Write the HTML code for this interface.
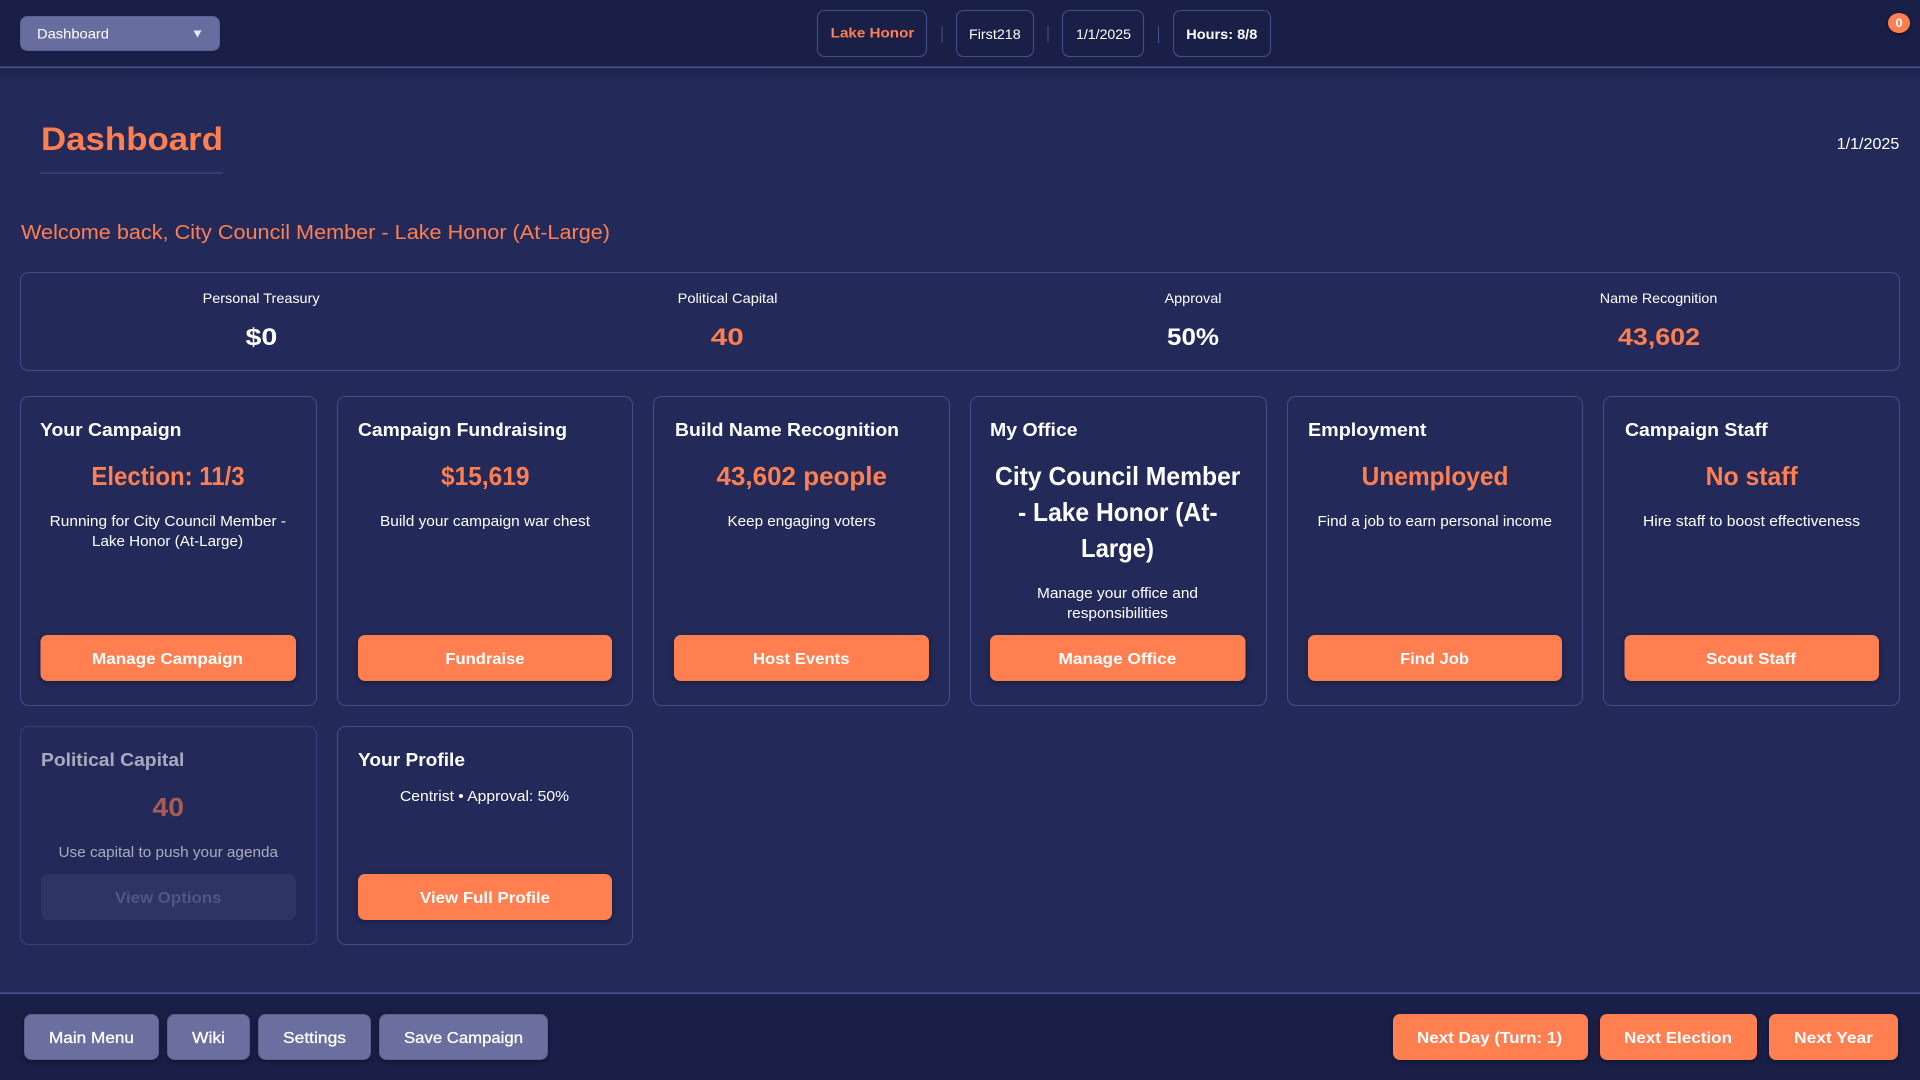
<!DOCTYPE html>
<html lang="en"><head><meta charset="utf-8"><title>Dashboard</title>
<style>
html,body{margin:0;padding:0;width:1920px;height:1080px;overflow:hidden;background:#232a5a}
svg{display:block}
text{font-family:"Liberation Sans",sans-serif;fill:#fff}
.b{font-weight:700}
.o{fill:#ff7f50}
.card{fill:#232a5a;stroke:#454c8a;stroke-width:1}
.pill{fill:#1a1f48;stroke:#464d8b;stroke-width:1.1}
.btn{fill:#ff7f50;filter:drop-shadow(0 2px 3px rgba(0,0,0,.35))}
.gbtn{fill:#6b6f9f;stroke:#5b6090;stroke-width:1;filter:drop-shadow(0 2px 3px rgba(0,0,0,.35))}
.t18{font-size:18.6px;font-weight:700}
.v{font-size:26px;font-weight:700}
.d{font-size:14.6px}
.bt{font-size:16px;font-weight:700}
.sl{font-size:14px}
.sv{font-size:24px;font-weight:700}
</style></head><body>
<svg width="1920" height="1080" viewBox="0 0 1920 1080" xmlns="http://www.w3.org/2000/svg">
<defs><linearGradient id="sh" x1="0" y1="0" x2="0" y2="1"><stop offset="0" stop-color="#000" stop-opacity=".16"/><stop offset="1" stop-color="#000" stop-opacity="0"/></linearGradient></defs>
<rect width="1920" height="1080" fill="#232a5a"/>
<!-- header -->
<rect width="1920" height="67" fill="#1a1f48"/>
<rect y="68" width="1920" height="14" fill="url(#sh)"/>
<rect y="66.500" width="1920" height="1.500" fill="#4a5290"/>
<rect x="20.500" y="16.500" width="199" height="34" rx="7" fill="#686d9f" stroke="#5d6295"/>
<text x="37" y="38.500" font-size="14" textLength="72" lengthAdjust="spacingAndGlyphs">Dashboard</text>
<path d="M193.500 30.500h8l-4 7z" fill="#e6e9fb"/>
<rect class="pill" x="817.500" y="10.500" width="109" height="46" rx="7"/>
<text class="b o" x="830.700" y="37.500" font-size="14" textLength="83.600" lengthAdjust="spacingAndGlyphs">Lake Honor</text>
<rect x="941.500" y="26" width="1" height="17" fill="#4a5290"/>
<rect class="pill" x="956.500" y="10.500" width="77" height="46" rx="7"/>
<text x="969" y="39" font-size="14" textLength="51.700" lengthAdjust="spacingAndGlyphs">First218</text>
<rect x="1047.500" y="26" width="1" height="17" fill="#4a5290"/>
<rect class="pill" x="1062.500" y="10.500" width="81" height="46" rx="7"/>
<text x="1076" y="39" font-size="14" textLength="55" lengthAdjust="spacingAndGlyphs">1/1/2025</text>
<rect x="1158" y="26" width="1" height="17" fill="#4a5290"/>
<rect class="pill" x="1173.500" y="10.500" width="97" height="46" rx="7"/>
<text class="b" x="1186.300" y="39" font-size="14" textLength="71" lengthAdjust="spacingAndGlyphs">Hours: 8/8</text>
<ellipse cx="1899" cy="23" rx="11" ry="10" fill="#ff7f50" style="filter:drop-shadow(0 1px 2px rgba(0,0,0,.5))"/>
<text class="b" x="1895.500" y="27" font-size="12" textLength="7" lengthAdjust="spacingAndGlyphs">0</text>

<!-- title -->
<text class="b o" x="41" y="150" font-size="32" textLength="182" lengthAdjust="spacingAndGlyphs">Dashboard</text>
<rect x="40" y="172.500" width="183" height="1" fill="#454c8a"/>
<text x="1836.700" y="149" font-size="16" textLength="62.600" lengthAdjust="spacingAndGlyphs">1/1/2025</text>
<text class="o" x="21" y="239" font-size="20" textLength="589" lengthAdjust="spacingAndGlyphs">Welcome back, City Council Member - Lake Honor (At-Large)</text>

<!-- stats -->
<rect class="card" x="20.500" y="272.500" width="1879" height="98" rx="8"/>
<text class="sl" x="202.600" y="303" textLength="117" lengthAdjust="spacingAndGlyphs">Personal Treasury</text>
<text class="sv" x="245.500" y="345" textLength="31.800" lengthAdjust="spacingAndGlyphs">$0</text>
<text class="sl" x="677.700" y="303" textLength="99.800" lengthAdjust="spacingAndGlyphs">Political Capital</text>
<text class="sv o" x="710.800" y="345" textLength="33" lengthAdjust="spacingAndGlyphs">40</text>
<text class="sl" x="1164.500" y="303" textLength="57" lengthAdjust="spacingAndGlyphs">Approval</text>
<text class="sv" x="1167" y="345" textLength="52" lengthAdjust="spacingAndGlyphs">50%</text>
<text class="sl" x="1599.800" y="303" textLength="117.500" lengthAdjust="spacingAndGlyphs">Name Recognition</text>
<text class="sv o" x="1618" y="345" textLength="82" lengthAdjust="spacingAndGlyphs">43,602</text>

<!-- row 1 -->
<rect class="card" x="20.500" y="396.500" width="296" height="309" rx="8"/>
<text class="t18" x="40" y="436" textLength="141.500" lengthAdjust="spacingAndGlyphs">Your Campaign</text>
<text class="v o" x="91.400" y="485" textLength="153.200" lengthAdjust="spacingAndGlyphs">Election: 11/3</text>
<text class="d" x="49.700" y="526" textLength="236.300" lengthAdjust="spacingAndGlyphs">Running for City Council Member -</text>
<text class="d" x="92" y="546" textLength="151" lengthAdjust="spacingAndGlyphs">Lake Honor (At-Large)</text>
<rect class="btn" x="40.500" y="635" width="255.500" height="46" rx="7"/>
<text class="bt" x="92" y="664" textLength="151" lengthAdjust="spacingAndGlyphs">Manage Campaign</text>

<rect class="card" x="337.500" y="396.500" width="295" height="309" rx="8"/>
<text class="t18" x="358" y="436" textLength="209" lengthAdjust="spacingAndGlyphs">Campaign Fundraising</text>
<text class="v o" x="441" y="485" textLength="88.500" lengthAdjust="spacingAndGlyphs">$15,619</text>
<text class="d" x="380" y="526" textLength="210" lengthAdjust="spacingAndGlyphs">Build your campaign war chest</text>
<rect class="btn" x="358" y="635" width="254" height="46" rx="7"/>
<text class="bt" x="445.400" y="664" textLength="79.100" lengthAdjust="spacingAndGlyphs">Fundraise</text>

<rect class="card" x="653.500" y="396.500" width="296" height="309" rx="8"/>
<text class="t18" x="675" y="436" textLength="224" lengthAdjust="spacingAndGlyphs">Build Name Recognition</text>
<text class="v o" x="716.500" y="485" textLength="170.500" lengthAdjust="spacingAndGlyphs">43,602 people</text>
<text class="d" x="727.500" y="526" textLength="148.100" lengthAdjust="spacingAndGlyphs">Keep engaging voters</text>
<rect class="btn" x="674" y="635" width="255" height="46" rx="7"/>
<text class="bt" x="753" y="664" textLength="96.500" lengthAdjust="spacingAndGlyphs">Host Events</text>

<rect class="card" x="970.500" y="396.500" width="296" height="309" rx="8"/>
<text class="t18" x="990" y="436" textLength="87.600" lengthAdjust="spacingAndGlyphs">My Office</text>
<text class="v" x="995" y="485" textLength="245.400" lengthAdjust="spacingAndGlyphs">City Council Member</text>
<text class="v" x="1018" y="521" textLength="199.600" lengthAdjust="spacingAndGlyphs">- Lake Honor (At-</text>
<text class="v" x="1081" y="557" textLength="73" lengthAdjust="spacingAndGlyphs">Large)</text>
<text class="d" x="1037" y="598" textLength="161" lengthAdjust="spacingAndGlyphs">Manage your office and</text>
<text class="d" x="1067" y="618" textLength="101" lengthAdjust="spacingAndGlyphs">responsibilities</text>
<rect class="btn" x="990" y="635" width="255.500" height="46" rx="7"/>
<text class="bt" x="1058.500" y="664" textLength="117.800" lengthAdjust="spacingAndGlyphs">Manage Office</text>

<rect class="card" x="1287.500" y="396.500" width="295" height="309" rx="8"/>
<text class="t18" x="1308" y="436" textLength="118.500" lengthAdjust="spacingAndGlyphs">Employment</text>
<text class="v o" x="1361.600" y="485" textLength="146.900" lengthAdjust="spacingAndGlyphs">Unemployed</text>
<text class="d" x="1317.500" y="526" textLength="234.500" lengthAdjust="spacingAndGlyphs">Find a job to earn personal income</text>
<rect class="btn" x="1308" y="635" width="254" height="46" rx="7"/>
<text class="bt" x="1400" y="664" textLength="69" lengthAdjust="spacingAndGlyphs">Find Job</text>

<rect class="card" x="1603.500" y="396.500" width="296" height="309" rx="8"/>
<text class="t18" x="1625" y="436" textLength="142.600" lengthAdjust="spacingAndGlyphs">Campaign Staff</text>
<text class="v o" x="1705.600" y="485" textLength="92.200" lengthAdjust="spacingAndGlyphs">No staff</text>
<text class="d" x="1643" y="526" textLength="217" lengthAdjust="spacingAndGlyphs">Hire staff to boost effectiveness</text>
<rect class="btn" x="1624.500" y="635" width="254.500" height="46" rx="7"/>
<text class="bt" x="1706" y="664" textLength="90" lengthAdjust="spacingAndGlyphs">Scout Staff</text>

<!-- row 2 -->
<g opacity=".6">
<rect class="card" x="20.500" y="726.500" width="296" height="218" rx="8"/>
<text class="t18" x="41" y="766" textLength="143.400" lengthAdjust="spacingAndGlyphs">Political Capital</text>
<text class="v o" x="152.400" y="816" textLength="31.600" lengthAdjust="spacingAndGlyphs">40</text>
<text class="d" x="58.500" y="857" textLength="219.500" lengthAdjust="spacingAndGlyphs">Use capital to push your agenda</text>
</g>
<rect x="41" y="874" width="255" height="46" rx="7" fill="#2f3563"/>
<text class="bt" x="115" y="903" textLength="106.500" lengthAdjust="spacingAndGlyphs" style="fill:#4f5688">View Options</text>

<rect class="card" x="337.500" y="726.500" width="295" height="218" rx="8"/>
<text class="t18" x="358" y="766" textLength="107" lengthAdjust="spacingAndGlyphs">Your Profile</text>
<text class="d" x="400" y="801" textLength="169" lengthAdjust="spacingAndGlyphs">Centrist • Approval: 50%</text>
<rect class="btn" x="358" y="874" width="254" height="46" rx="7"/>
<text class="bt" x="420" y="903" textLength="130" lengthAdjust="spacingAndGlyphs">View Full Profile</text>

<!-- footer -->
<rect y="993" width="1920" height="87" fill="#1a1f48"/>
<rect y="992.500" width="1920" height="1.500" fill="#4a5290"/>
<rect class="gbtn" x="24.500" y="1014.500" width="134" height="45" rx="7"/>
<text class="bt" style="font-weight:400" x="49" y="1043" textLength="85" lengthAdjust="spacingAndGlyphs" stroke="#fff" stroke-width=".3">Main Menu</text>
<rect class="gbtn" x="167.500" y="1014.500" width="82" height="45" rx="7"/>
<text class="bt" style="font-weight:400" x="192" y="1043" textLength="33" lengthAdjust="spacingAndGlyphs" stroke="#fff" stroke-width=".3">Wiki</text>
<rect class="gbtn" x="258.500" y="1014.500" width="112" height="45" rx="7"/>
<text class="bt" style="font-weight:400" x="283" y="1043" textLength="63" lengthAdjust="spacingAndGlyphs" stroke="#fff" stroke-width=".3">Settings</text>
<rect class="gbtn" x="379.500" y="1014.500" width="168" height="45" rx="7"/>
<text class="bt" style="font-weight:400" x="404" y="1043" textLength="119" lengthAdjust="spacingAndGlyphs" stroke="#fff" stroke-width=".3">Save Campaign</text>
<rect class="btn" x="1393" y="1014" width="195" height="46" rx="7"/>
<text class="bt" x="1417" y="1043" textLength="145" lengthAdjust="spacingAndGlyphs">Next Day (Turn: 1)</text>
<rect class="btn" x="1600" y="1014" width="157" height="46" rx="7"/>
<text class="bt" x="1624" y="1043" textLength="108" lengthAdjust="spacingAndGlyphs">Next Election</text>
<rect class="btn" x="1769" y="1014" width="129" height="46" rx="7"/>
<text class="bt" x="1794" y="1043" textLength="79" lengthAdjust="spacingAndGlyphs">Next Year</text>
</svg>
</body></html>
